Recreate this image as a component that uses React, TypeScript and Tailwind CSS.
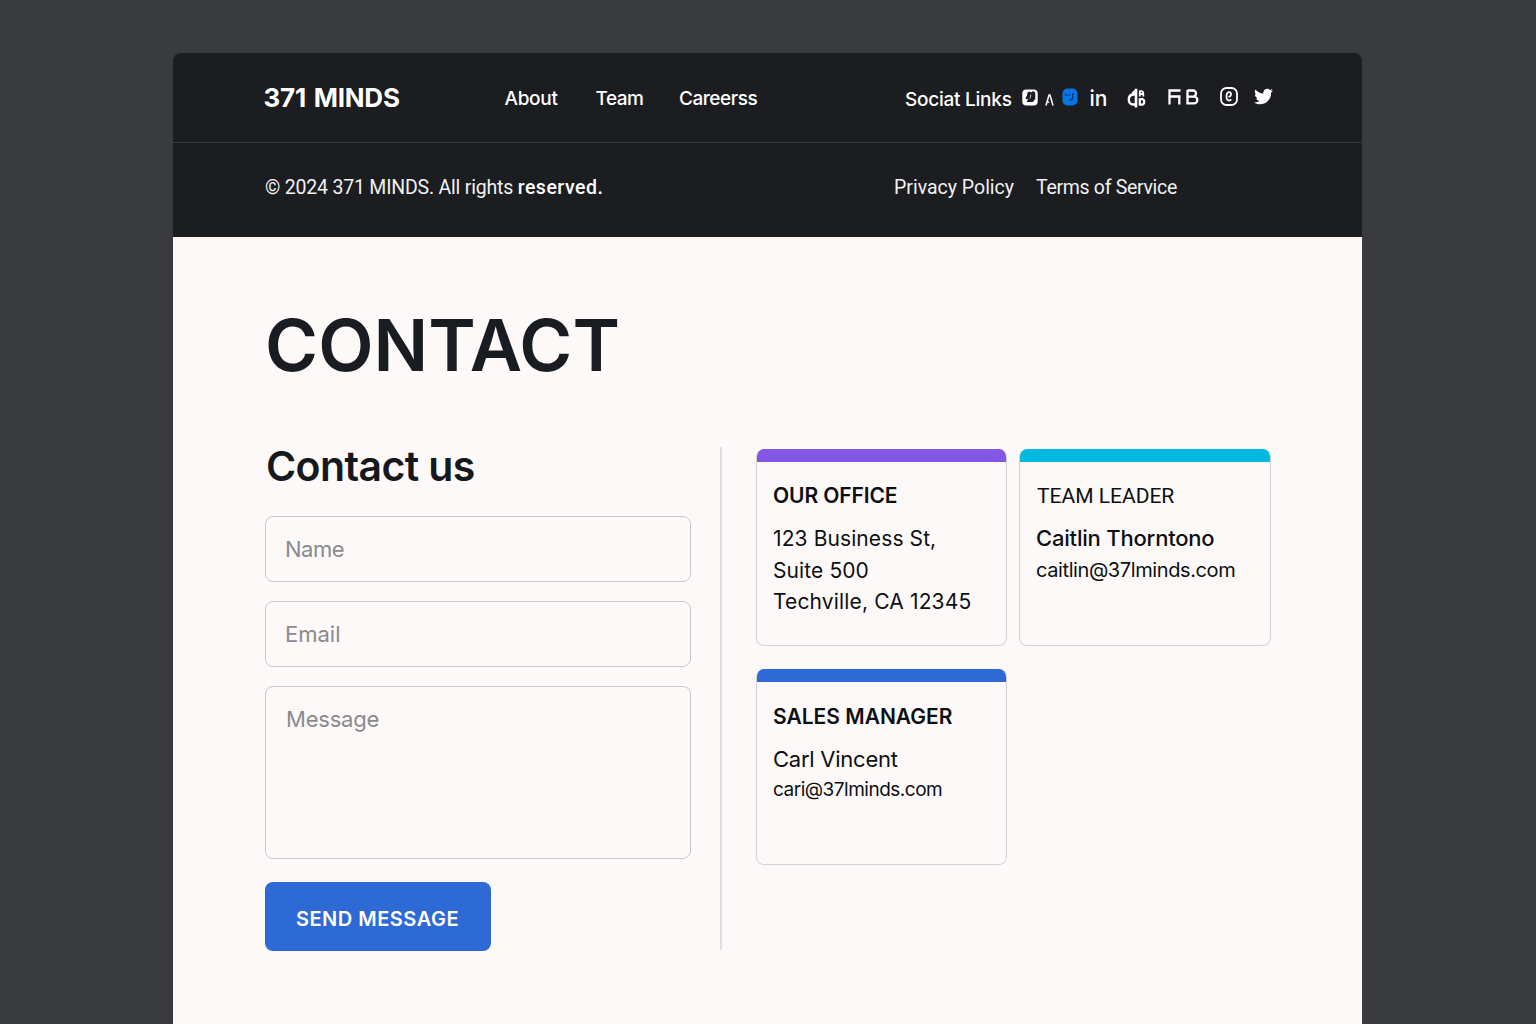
import { FaTwitter } from "react-icons/fa";

function LetterTile() {
  return (
    <svg width="16" height="17" viewBox="0 0 16 17" className="-mt-px">
      <rect x="0.300" y="0.500" width="15.400" height="16" rx="4" fill="#fff" />
      <path d="M5.500 3.500L7.500 2.500 9 3.500l1.500-1.300 2.200.6.600 2v5L11 13H4.500L6.500 9.500 4.500 10.500 3.500 9 5 6.500z" fill="#1b1e22" />
      <path d="M8.800 5.500L8 9.500" stroke="#fff" strokeWidth="0.700" fill="none" />
    </svg>
  );
}

function CaretLetter() {
  return (
    <svg width="9" height="12" viewBox="0 0 9 12" fill="none" stroke="#f4f4f4" strokeWidth="1.600" className="mt-1 ml-[7px]">
      <path d="M1 11.500L4 1h1L8 11.500M2.600 8.300h1.600" />
    </svg>
  );
}

function BlueTile() {
  return (
    <svg width="16" height="18" viewBox="0 0 16 18" className="-mt-px ml-2">
      <rect x="0.500" y="0.500" width="15" height="17" rx="5" fill="#0b74e4" />
      <path d="M3.200 5.500l1.500 2.500M6.500 7.200h1.500M10.800 5v4.500q0 2.500-3.300 2.500" stroke="#093a80" strokeWidth="1.400" fill="none" />
    </svg>
  );
}

function MonogramIcon() {
  return (
    <svg width="19" height="20" viewBox="0 0 19 20" fill="none" stroke="#fff" className="mt-px">
      <path d="M8 6.500H6Q1.800 7 1.800 11.500T6 16.500H8" strokeWidth="2.400" />
      <path d="M9 0.800v18.700M5.500 5.500l4-3.500" strokeWidth="2.600" />
      <path d="M12.800 2.500v6M12.500 3.200h2.300q1.500.3 1.500 2.200v3M12.500 6h3" strokeWidth="1.800" />
      <path d="M12.800 10.500v7M12.500 11.200h2.700q2 .4 2 2.700t-2 2.800h-2.700" strokeWidth="2.200" />
    </svg>
  );
}

function FiBIcon() {
  return (
    <svg width="31" height="16" viewBox="0 0 31 16" fill="none" stroke="#fff" strokeWidth="2.300" className="-mt-px">
      <path d="M1.500 15.500V1.500H12.500M1.500 7.500H11.300V15.500" />
      <path d="M19.500 1.500h5.500a3 3 0 0 1 0 6.100h-5.500M25 7.600h1a3.300 3.300 0 0 1 0 6.700h-6.500V1" />
    </svg>
  );
}

function SwirlIcon() {
  return (
    <svg width="18" height="19" viewBox="0 0 18 19" fill="none" stroke="#fff" className="-mt-0.5">
      <rect x="1" y="1" width="16" height="17" rx="5.500" strokeWidth="1.800" />
      <path d="M8.500 10q2.500-.7 2.500-2.800T9.200 5.200Q6.500 5.500 6.500 9.500T9.300 13.500q1.200 0 1.700-1.300" strokeWidth="1.800" />
    </svg>
  );
}

const cardBase = "flex flex-col overflow-hidden rounded-lg border border-t-0 border-[#d6d2d3]";

export default function App() {
  return (
    <div className="flex h-screen justify-center overflow-hidden bg-[#3a3b3f] pt-[53px] pr-px font-[Inter,sans-serif]">
      <div className="flex w-[1189px] flex-col">
        <header className="shrink-0 rounded-t-lg bg-[#1b1d21] text-white">
          <div className="flex h-[90px] items-center border-b border-[#393c40] pl-[90.5px] whitespace-nowrap">
            <div className="w-[241px] text-[26px] leading-8 font-bold tracking-[-0.25px] [word-spacing:2px]">371 MINDS</div>
            <nav className="mt-0.5 flex text-[19px] leading-6 font-medium">
              <a className="w-[91px] tracking-[-0.3px]">About</a>
              <a className="w-[83.500px] tracking-[-0.5px]">Team</a>
              <a className="w-[226px] tracking-[-0.45px]">Careerss</a>
            </nav>
            <div className="flex items-center">
              <span className="mt-1 w-[116.500px] text-[19px] leading-6 font-medium tracking-[-0.25px]">Sociat Links</span>
              <LetterTile />
              <CaretLetter />
              <BlueTile />
              <span className="mt-[3px] ml-3 w-[37px] text-[21px] leading-6 font-medium">in</span>
              <MonogramIcon />
              <span className="ml-[22px]"><FiBIcon /></span>
              <span className="ml-[21px]"><SwirlIcon /></span>
              <FaTwitter className="-mt-0.5 ml-4 size-[19px]" />
            </div>
          </div>
          <div className="flex h-[94px] items-center pb-[5px] pl-[92px] font-[Roboto,sans-serif] text-[19.5px] leading-6 whitespace-nowrap text-[#f1f1f1]">
            <div className="w-[629px]">
              <span className="tracking-[-0.2px]">© 2024 371 MINDS. All rights </span>
              <span className="font-medium tracking-[0.5px] text-white">reserved.</span>
            </div>
            <a className="w-[142px]">Privacy Policy</a>
            <a className="tracking-[-0.3px]">Terms of Service</a>
          </div>
        </header>

        <main className="flex-1 bg-[#fdf9f8] pt-[72px] pl-[92px] text-[#0d1013]">
          <h1 className="text-[72px] leading-[72px] font-semibold tracking-[0.1px] text-[#191d21]">CONTACT</h1>
          <div className="mt-[66px] flex">
            <form className="flex w-[426px] flex-col">
              <h2 className="-mt-1.5 ml-px text-[41px] leading-[50px] font-semibold tracking-[-0.600px] text-[#15191d]">Contact us</h2>
              <div className="mt-[25px] flex h-[66px] items-center rounded-lg border border-[#cbc7c8] px-[19px] text-[22px] tracking-[-0.5px] text-[#8a8a8e]">Name</div>
              <div className="mt-[19px] flex h-[66px] items-center rounded-lg border border-[#cbc7c8] px-[19px] pt-px text-[22px] text-[#8a8a8e]">Email</div>
              <div className="mt-[19px] h-[173px] rounded-lg border border-[#cbc7c8] px-5 pt-4 text-[22px] leading-8 tracking-[-0.2px] text-[#8a8a8e]">Message</div>
              <button type="button" className="mt-[23px] h-[69px] w-[226px] rounded-lg bg-[#2d6ad6] pt-1 pr-px text-[20px] font-semibold tracking-[0.5px] text-white">SEND MESSAGE</button>
            </form>
            <div className="ml-[29px] h-[503px] w-0.5 bg-[#e2dedf]" />
            <div className="mt-0.5 ml-[34px] grid h-fit grid-cols-[251px_252px] gap-x-3 gap-y-[23px] whitespace-nowrap">
              <section className={`${cardBase} h-[197px]`}>
                <div className="-mx-px h-[13px] shrink-0 bg-[#8456e8]" />
                <div className="pt-[22px] pl-4">
                  <h3 className="text-[21px] leading-6 font-semibold tracking-[-0.1px]">OUR OFFICE</h3>
                  <p className="mt-[15px] text-[21px] leading-[31.600px] tracking-[0.1px]">
                    123 Business St,<br />Suite 500<br /><span className="tracking-[0.15px]">Techville, CA 12345</span>
                  </p>
                </div>
              </section>
              <section className={`${cardBase} h-[197px]`}>
                <div className="-mx-px h-[13px] shrink-0 bg-[#02bae0]" />
                <div className="pt-[22px] pl-4">
                  <h3 className="pl-px font-[Roboto,sans-serif] text-[21px] leading-6">TEAM LEADER</h3>
                  <p className="mt-[15px] text-[22px] leading-[31px] font-medium tracking-[-0.2px]">Caitlin Thorntono</p>
                  <p className="text-[20px] leading-8 tracking-[-0.4px]">caitlin@37lminds.com</p>
                </div>
              </section>
              <section className={`${cardBase} h-[196px]`}>
                <div className="-mx-px h-[13px] shrink-0 bg-[#2d6ad6]" />
                <div className="pt-[23px] pl-4">
                  <h3 className="text-[21px] leading-6 font-semibold">SALES MANAGER</h3>
                  <p className="mt-3.5 text-[22px] leading-8 tracking-[-0.25px]">Carl Vincent</p>
                  <p className="text-[19px] leading-[30px] tracking-[-0.5px]">cari@37lminds.com</p>
                </div>
              </section>
            </div>
          </div>
        </main>
      </div>
    </div>
  );
}
